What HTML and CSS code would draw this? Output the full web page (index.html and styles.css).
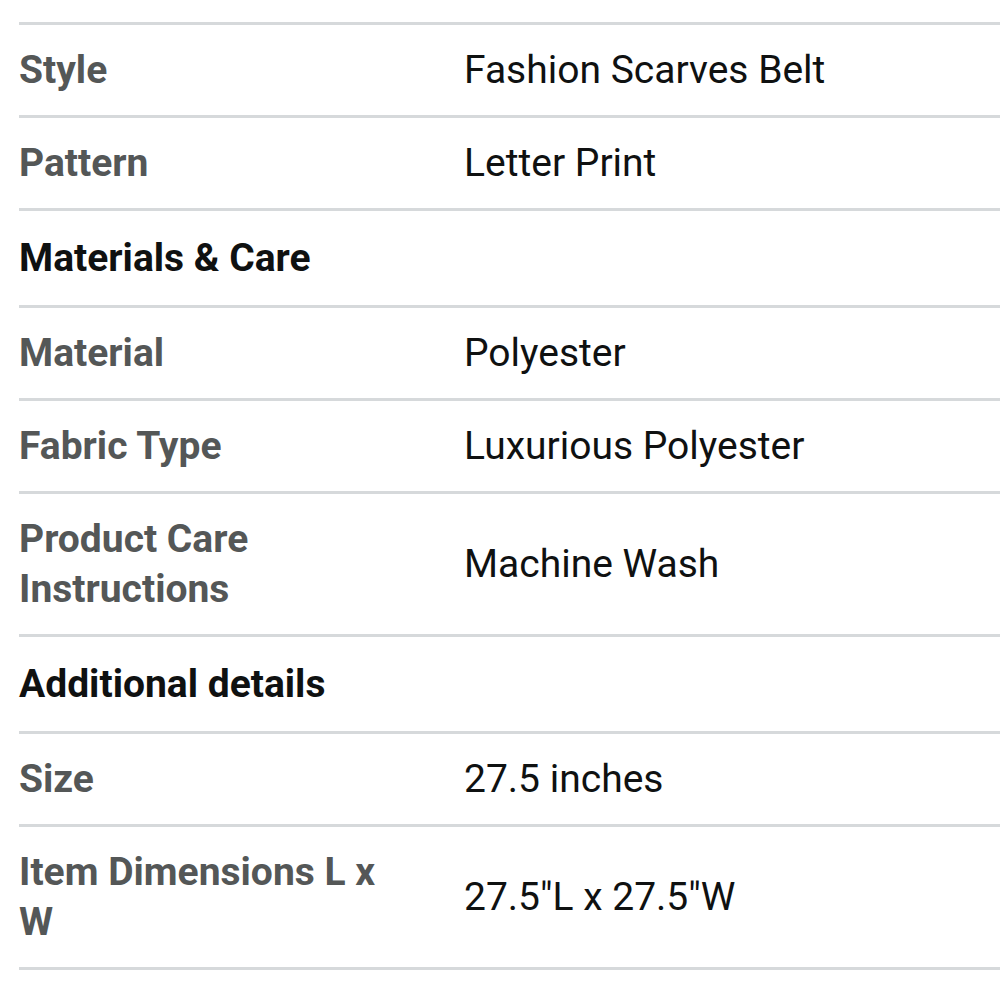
FILE: index.html
```html
<!DOCTYPE html>
<html lang="en">

<head>
  <meta charset="UTF-8">
  <meta name="viewport" content="width=device-width, initial-scale=1.0">
  <title>Product details</title>
  <link rel="stylesheet" href="styles.css">
</head>

<body>
  <div class="details">
    <div class="row">
      <div class="label">Style</div>
      <div class="value">Fashion Scarves Belt</div>
    </div>
    <div class="row">
      <div class="label">Pattern</div>
      <div class="value">Letter Print</div>
    </div>
    <div class="section">Materials &amp; Care</div>
    <div class="row">
      <div class="label">Material</div>
      <div class="value">Polyester</div>
    </div>
    <div class="row">
      <div class="label">Fabric Type</div>
      <div class="value">Luxurious Polyester</div>
    </div>
    <div class="row">
      <div class="label">Product Care Instructions</div>
      <div class="value">Machine Wash</div>
    </div>
    <div class="section">Additional details</div>
    <div class="row">
      <div class="label">Size</div>
      <div class="value">27.5 inches</div>
    </div>
    <div class="row">
      <div class="label">Item Dimensions L x W</div>
      <div class="value">27.5"L x 27.5"W</div>
    </div>
  </div>
</body>

</html>
```

FILE: styles.css
```css
body {
  margin: 0;
  background: #ffffff;
  font-family: Roboto, "Liberation Sans", sans-serif;
  overflow: hidden;
}

.details {
  margin: 22px 0 0 19px;
  border-top: 3px solid #d6d9db;
}

.row {
  display: grid;
  grid-template-columns: 445px 1fr;
  align-items: center;
  min-height: 90px;
  border-bottom: 3px solid #d6d9db;
}

/* две строки в подписи дают строку высотой 140px */
.label {
  padding: 20px 60px 20px 0;
  font-size: 39px;
  font-weight: 700;
  line-height: 50px;
  color: #545757;
}

.value {
  font-size: 39px;
  line-height: 50px;
  color: #0f1111;
}

.section {
  display: flex;
  align-items: center;
  height: 94px;
  border-bottom: 3px solid #d6d9db;
  font-size: 39px;
  font-weight: 700;
  color: #0f1111;
}
```
